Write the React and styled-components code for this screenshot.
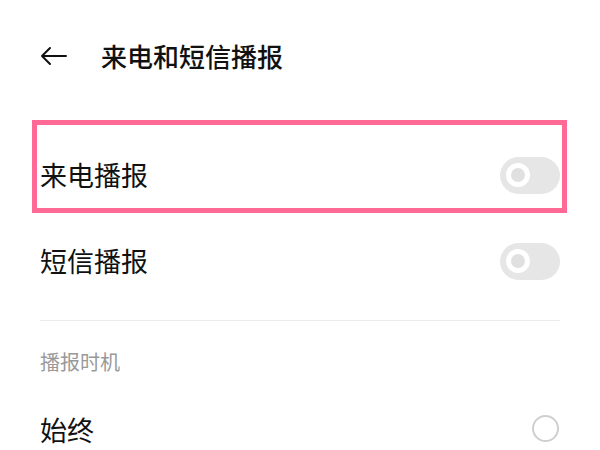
import React from "react";
import styled, { createGlobalStyle } from "styled-components";

const GlobalStyle = createGlobalStyle`
  html, body {
    margin: 0;
    padding: 0;
    background: #fff;
    font-family: "Noto Sans CJK SC", "Noto Sans", sans-serif;
    color: #111;
  }
`;

const Page = styled.div`
  width: 600px;
  height: 450px;
  overflow: hidden;
  background: #fff;
`;

const Header = styled.div`
  height: 112px;
  display: flex;
  align-items: center;
  padding: 0 40px;
  gap: 34px;
`;

const BackIcon = styled.svg`
  width: 27px;
  height: 20px;
  flex-shrink: 0;
`;

const Title = styled.h1`
  margin: 0;
  font-size: 26px;
  font-weight: 500;
  line-height: 32px;
  color: #111;
`;

const Highlight = styled.div`
  box-sizing: border-box;
  margin: 8px 33px 0 32px;
  height: 93px;
  border: 5px solid #fe6a95;
  padding: 20px 2px 0 3px;
`;

const Row = styled.div`
  height: ${(p) => p.$h || 60}px;
  display: flex;
  align-items: center;
  justify-content: space-between;
  padding: 0 ${(p) => (p.$flush ? 0 : 40)}px;
`;

const Label = styled.span`
  font-size: 27px;
  line-height: 32px;
  color: #111;
`;

const Toggle = styled.div`
  width: 60px;
  height: 37px;
  border-radius: 19px;
  background: #e6e6e6;
  display: flex;
  align-items: center;
`;

const Knob = styled.span`
  box-sizing: border-box;
  width: 24px;
  height: 24px;
  margin-left: 6px;
  border-radius: 50%;
  border: 5px solid #fff;
  background: #e0e0e0;
`;

const Divider = styled.div`
  height: 1px;
  background: #ececec;
  margin: 11px 40px 0;
`;

const SectionTitle = styled.div`
  padding: 29px 40px 0;
  font-size: 20px;
  line-height: 24px;
  color: #999;
`;

const Radio = styled.span`
  box-sizing: border-box;
  width: 27px;
  height: 27px;
  border-radius: 50%;
  border: 2px solid #cfcfcf;
  margin-right: 1px;
  margin-top: -3px;
`;

const Switch = () => (
  <Toggle>
    <Knob />
  </Toggle>
);

export default function App() {
  return (
    <Page>
      <GlobalStyle />
      <Header>
        <BackIcon viewBox="0 0 27 20" fill="none">
          <path
            d="M26 10H2M10 2L2 10L10 18"
            stroke="#111"
            strokeWidth="2"
            strokeLinecap="round"
            strokeLinejoin="round"
          />
        </BackIcon>
        <Title>来电和短信播报</Title>
      </Header>

      <Highlight>
        <Row $flush>
          <Label>来电播报</Label>
          <Switch />
        </Row>
      </Highlight>

      <Row $h={96}>
        <Label>短信播报</Label>
        <Switch />
      </Row>

      <Divider />
      <SectionTitle>播报时机</SectionTitle>

      <Row $h={112}>
        <Label>始终</Label>
        <Radio />
      </Row>
    </Page>
  );
}
